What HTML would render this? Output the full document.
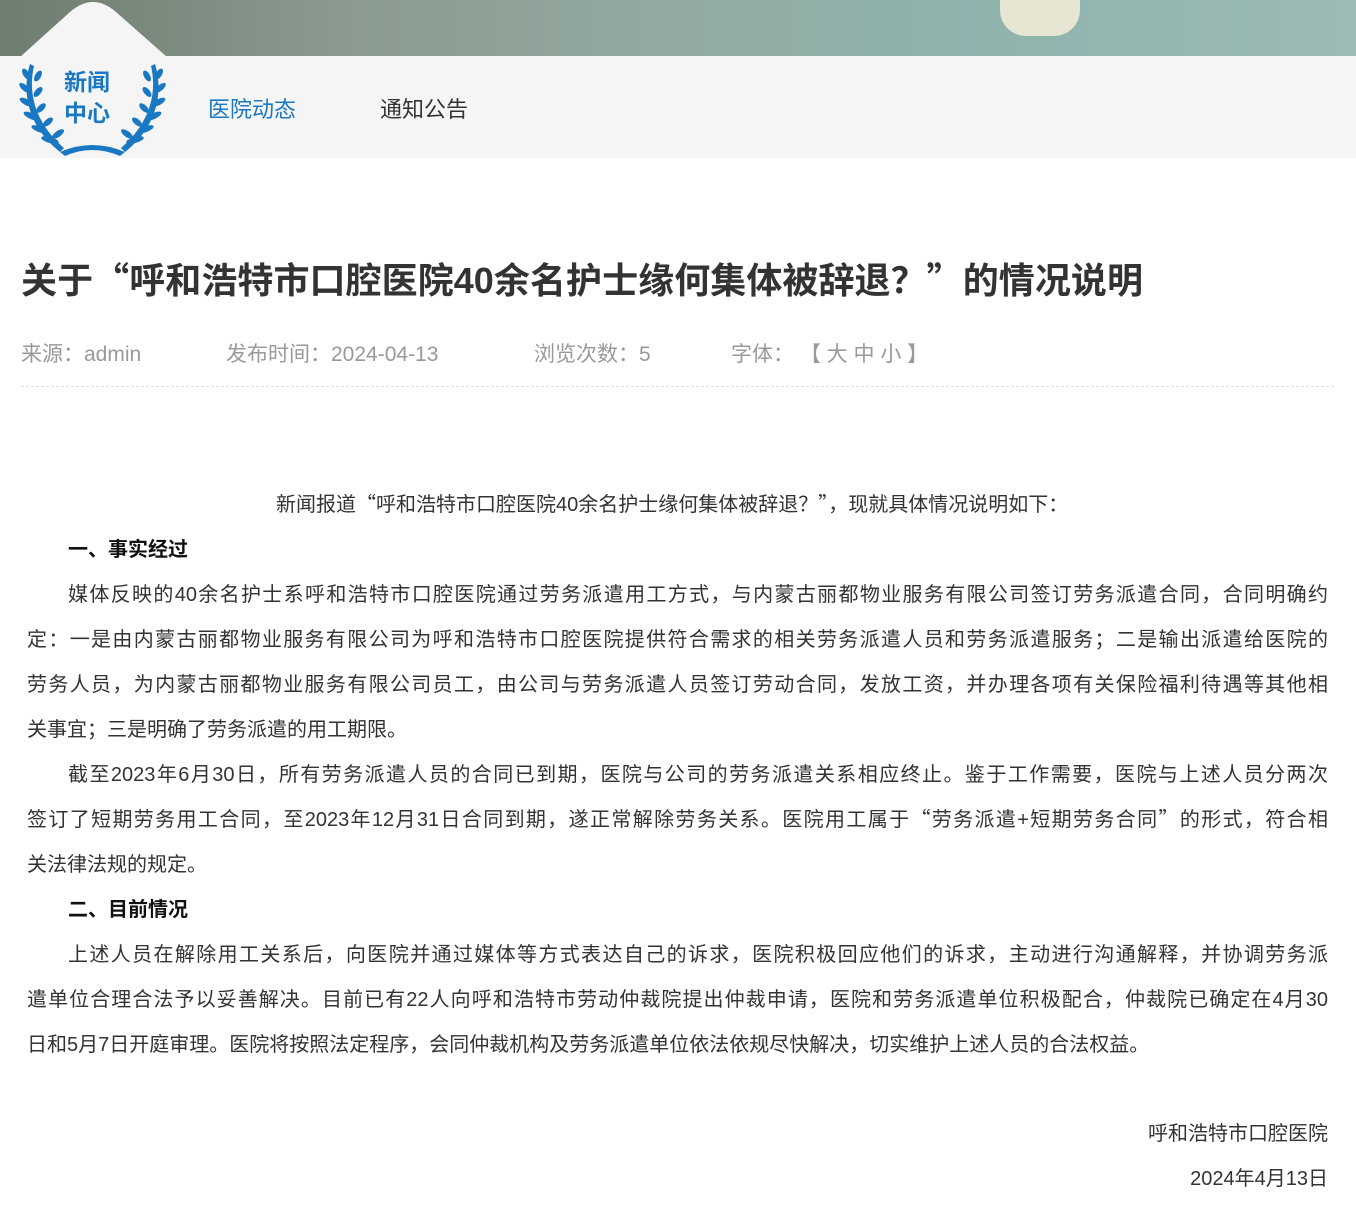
<!DOCTYPE html>
<html><head><meta charset="utf-8"><style>
*{margin:0;padding:0;box-sizing:border-box}
body{width:1356px;height:1207px;background:#fff;font-family:"Liberation Sans","Noto Sans CJK SC",sans-serif;color:#333;position:relative;overflow:hidden}
.banner{position:absolute;left:0;top:0;width:1356px;height:56px;background:linear-gradient(90deg,#6f7c70 0%,#8a9a8e 25%,#93aaa2 50%,#8fb2ad 70%,#9cbab6 100%)}
.tooth{position:absolute;left:1000px;top:0;width:80px;height:36px;background:#e6e6d2;border-radius:0 0 26px 26px}
.bar{position:absolute;left:0;top:56px;width:1356px;height:102px;background:#f5f5f5}
.logo{position:absolute;left:64px;top:67px;font-size:23px;font-weight:bold;color:#1a78c2;line-height:31px}
.nav1{position:absolute;left:208px;top:92px;font-size:22px;color:#1a78c2}
.nav2{position:absolute;left:380px;top:92px;font-size:22px;color:#333}
h1{position:absolute;left:21px;top:252px;width:1122px;font-size:36px;font-weight:bold;color:#333;white-space:nowrap;text-align:justify;text-align-last:justify}
.meta{position:absolute;top:338px;font-size:21px;color:#999;white-space:nowrap}
.line{position:absolute;left:21px;top:386px;width:1313px;border-top:1px dashed #ddd}
.content{position:absolute;left:27px;top:483px;width:1301px;font-size:20px;line-height:45px;color:#333}
.content div{height:45px;overflow:visible;text-align:justify;text-align-last:justify;white-space:nowrap}
.content div.l{text-align-last:left}
.q{font-family:"Noto Sans CJK SC",sans-serif;line-height:1}
.content b{color:#111}
.sig{position:absolute;right:28px;font-size:20px;color:#333}
</style></head><body>
<div class="banner"><div class="tooth"></div></div>
<div class="bar"></div>
<svg style="position:absolute;left:0;top:0" width="200" height="160" viewBox="0 0 200 160">
<path d="M20 57 L70 12 Q93 -8 116 12 L167 57Z" fill="#f5f5f5"/>
<g fill="#1a78c2" transform="translate(20 60)">
<path d="M10 4 C2 30 6 65 40 92 L44 88 C14 62 8 32 14 6Z"/>
<path d="M135 4 C143 30 139 65 105 92 L101 88 C131 62 137 32 131 6Z"/>
<g id="l">
<ellipse cx="6" cy="14" rx="3" ry="6" transform="rotate(-30 6 14)"/>
<ellipse cx="5" cy="28" rx="3" ry="7" transform="rotate(-50 5 28)"/>
<ellipse cx="6" cy="42" rx="3" ry="7" transform="rotate(-60 6 42)"/>
<ellipse cx="11" cy="56" rx="3" ry="8" transform="rotate(-65 11 56)"/>
<ellipse cx="19" cy="69" rx="3" ry="8" transform="rotate(-70 19 69)"/>
<ellipse cx="30" cy="80" rx="3" ry="9" transform="rotate(-75 30 80)"/>
<ellipse cx="18" cy="16" rx="3" ry="6" transform="rotate(30 18 16)"/>
<ellipse cx="18" cy="32" rx="3" ry="6" transform="rotate(40 18 32)"/>
<ellipse cx="21" cy="48" rx="3" ry="6" transform="rotate(45 21 48)"/>
<ellipse cx="28" cy="62" rx="3" ry="6" transform="rotate(50 28 62)"/>
<ellipse cx="38" cy="74" rx="3" ry="7" transform="rotate(55 38 74)"/>
</g>
<use href="#l" transform="translate(145 0) scale(-1 1)"/>
<path d="M40 92 Q72 78 105 92 L100 96 Q72 84 45 96Z"/>
</g></svg>
<div class="logo">新闻<br>中心</div>
<div class="nav1">医院动态</div>
<div class="nav2">通知公告</div>
<h1>关于<span class="q">“</span>呼和浩特市口腔医院40余名护士缘何集体被辞退？<span class="q">”</span>的情况说明</h1>
<div class="meta" style="left:21px">来源：admin</div>
<div class="meta" style="left:226px">发布时间：2024-04-13</div>
<div class="meta" style="left:534px">浏览次数：5</div>
<div class="meta" style="left:731px">字体： 【 大 中 小 】</div>
<div class="line"></div>
<div class="content">
<div class="l" style="padding-left:249px;width:1081px">新闻报道<span class="q">“</span>呼和浩特市口腔医院40余名护士缘何集体被辞退？<span class="q">”</span>，现就具体情况说明如下：</div>
<div class="l" style="padding-left:41px"><b>一、事实经过</b></div>
<div style="padding-left:41px">媒体反映的40余名护士系呼和浩特市口腔医院通过劳务派遣用工方式，与内蒙古丽都物业服务有限公司签订劳务派遣合同，合同明确约</div>
<div>定：一是由内蒙古丽都物业服务有限公司为呼和浩特市口腔医院提供符合需求的相关劳务派遣人员和劳务派遣服务；二是输出派遣给医院的</div>
<div>劳务人员，为内蒙古丽都物业服务有限公司员工，由公司与劳务派遣人员签订劳动合同，发放工资，并办理各项有关保险福利待遇等其他相</div>
<div class="l">关事宜；三是明确了劳务派遣的用工期限。</div>
<div style="padding-left:41px">截至2023年6月30日，所有劳务派遣人员的合同已到期，医院与公司的劳务派遣关系相应终止。鉴于工作需要，医院与上述人员分两次</div>
<div>签订了短期劳务用工合同，至2023年12月31日合同到期，遂正常解除劳务关系。医院用工属于<span class="q">“</span>劳务派遣+短期劳务合同<span class="q">”</span>的形式，符合相</div>
<div class="l">关法律法规的规定。</div>
<div class="l" style="padding-left:41px"><b>二、目前情况</b></div>
<div style="padding-left:41px">上述人员在解除用工关系后，向医院并通过媒体等方式表达自己的诉求，医院积极回应他们的诉求，主动进行沟通解释，并协调劳务派</div>
<div>遣单位合理合法予以妥善解决。目前已有22人向呼和浩特市劳动仲裁院提出仲裁申请，医院和劳务派遣单位积极配合，仲裁院已确定在4月30</div>
<div class="l">日和5月7日开庭审理。医院将按照法定程序，会同仲裁机构及劳务派遣单位依法依规尽快解决，切实维护上述人员的合法权益。</div>
</div>
<div class="sig" style="top:1117px">呼和浩特市口腔医院</div>
<div class="sig" style="top:1162px">2024年4月13日</div>
</body></html>
